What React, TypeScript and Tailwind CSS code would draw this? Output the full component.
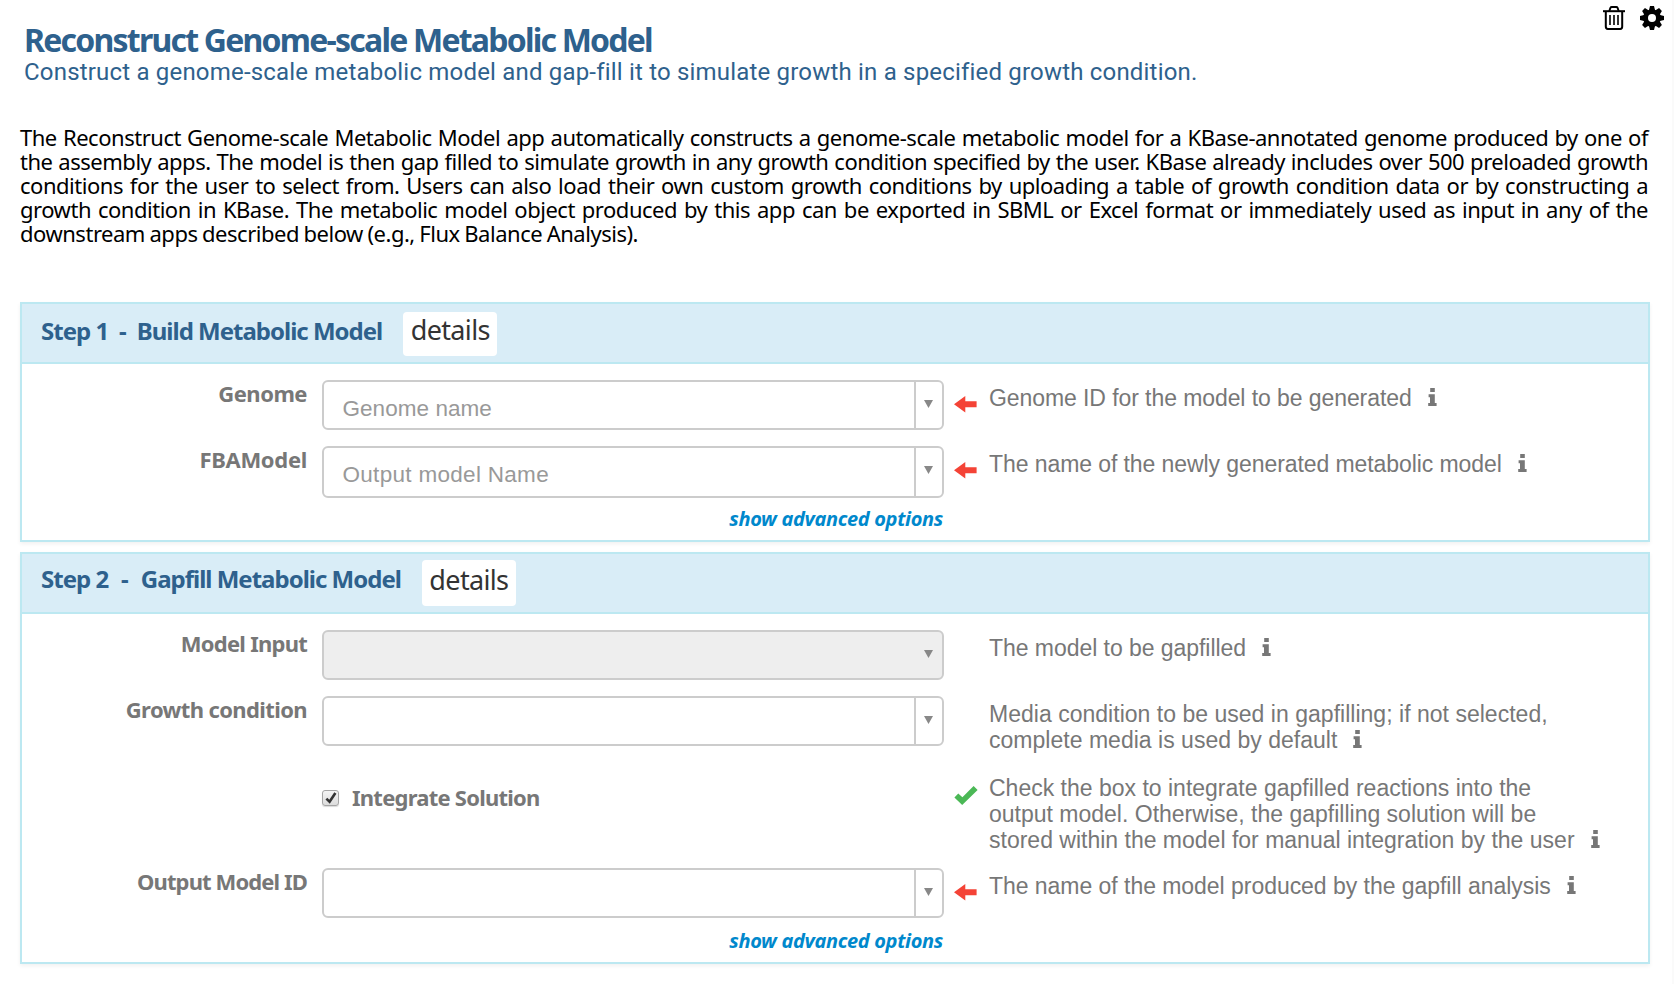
import type { ReactNode } from 'react';

const noto = "font-['Noto_Sans',sans-serif]";
const helv = "font-['Liberation_Sans',Arial,sans-serif]";

const TrashIcon = () => (
  <svg className="h-6 w-[22px]" viewBox="0 0 22 24" fill="none" stroke="#000">
    <path d="M0 5.2H22" strokeWidth="2" />
    <path d="M6.3 5L7.4 1.9Q7.8 1 8.8 1H13.2Q14.2 1 14.6 1.9L15.7 5" strokeWidth="1.9" />
    <path d="M2.8 5V20.6Q2.8 23 4.8 23H17.2Q19.2 23 19.2 20.6V5" strokeWidth="2" />
    <path d="M7 9V19M11 9V19M15 9V19" strokeWidth="1.6" />
  </svg>
);

const GearIcon = () => (
  <svg className="h-6 w-6" viewBox="-12 -12 24 24">
    <g fill="#000">
      {[0, 45, 90, 135].map((a) => (
        <path key={a} transform={`rotate(${a})`} d="M-2 -12H2L3 -8V8L2 12H-2L-3 8V-8Z" />
      ))}
      <circle r="8.8" />
    </g>
    <circle r="4" fill="#fff" />
  </svg>
);

const RedArrow = () => (
  <svg className="mt-[15.5px] h-[17px] w-[23px]" viewBox="0 0 23 17" fill="#f44336">
    <path d="M0 8.3L11.3 0V5.3H22.6V11.3H11.3V16.6Z" />
  </svg>
);

const GreenCheck = () => (
  <svg className="mt-[11px] h-[19px] w-[24px]" viewBox="0 0 24 19" fill="#4bb856">
    <path d="M0.4 11.4L4.3 7.4L8.4 11.3L19.6 0L23.6 4L8.2 19Z" />
  </svg>
);

const InfoIcon = () => (
  <svg className="ml-4 inline-block h-[18px] w-[9px] align-baseline" viewBox="0 0 9 18" fill="#777">
    <path d="M2.2 0H6.8V4H2.2ZM0.6 6.2H6.8V15H8.6V18H0.2V15H2V9.2H0.6Z" />
  </svg>
);

const Caret = () => (
  <svg className="h-2 w-[9px]" viewBox="0 0 9 8" fill="#888">
    <path d="M0 0H9L4.5 8Z" />
  </svg>
);

function Combo({ placeholder, spacing = '', tall, disabled }: { placeholder?: string; spacing?: string; tall?: boolean; disabled?: boolean }) {
  return (
    <div
      className={`flex w-[622px] rounded-[6px] border-2 border-[#ccc] ${tall ? 'h-[52px]' : 'h-[50px]'} ${disabled ? 'bg-[#eee]' : 'bg-white'}`}
    >
      <div className={`flex-1 pt-[14px] pl-[18.5px] text-[22.5px] leading-[26px] text-[#999] ${helv} ${spacing}`}>{placeholder}</div>
      <div className={`w-7 border-l-2 pt-[18px] pl-2 ${disabled ? 'border-transparent' : 'border-[#ccc]'}`}>
        <Caret />
      </div>
    </div>
  );
}

interface RowProps {
  label?: string;
  spacing?: string;
  field: ReactNode;
  mark?: ReactNode;
  lines: string[];
  height: string;
  descPad?: string;
  descSpacing?: string;
}

function Row({ label, spacing = '', field, mark, lines, height, descPad = 'pt-[5px]', descSpacing = '' }: RowProps) {
  return (
    <div className={`flex items-start ${height}`}>
      <div className={`w-[286px] pt-px pr-px text-right text-[22px] leading-6 font-bold whitespace-nowrap text-[#777] ${noto} ${spacing}`}>{label}</div>
      <div className="ml-[14px] w-[622px]">{field}</div>
      <div className="ml-[10px] w-[35px]">{mark}</div>
      <div className={`text-[23px] leading-[26px] whitespace-nowrap text-[#777] ${helv} ${descPad} ${descSpacing}`}>
        {lines.map((line, i) => (
          <div key={line} className="h-[26px]">
            {line}
            {i === lines.length - 1 && <InfoIcon />}
          </div>
        ))}
      </div>
    </div>
  );
}

function Panel({ step, title, titlePad, gap, button, children }: { step: string; title: string; titlePad: string; gap: string; button: string; children: ReactNode }) {
  return (
    <section className="w-[1630px] border-2 border-[#bce8f1] bg-white shadow-[0_2px_4px_rgba(0,0,0,0.06)]">
      <header className={`flex h-[60px] items-start border-b-2 border-[#bce8f1] bg-[#d9edf7] pl-[19px] ${noto}`}>
        <h2 className={`flex text-[24px] leading-[30px] font-bold tracking-[-1px] whitespace-pre text-[#2e618d] ${titlePad} ${gap}`}>
          <span>{step}</span>
          <span>-</span>
          <span>{title}</span>
        </h2>
        <button className={`ml-[21px] w-[94px] rounded-[4px] bg-white text-center text-[27px] leading-[30px] tracking-[-0.65px] text-[#333] ${button}`}>
          details
        </button>
      </header>
      {children}
    </section>
  );
}

const Advanced = () => (
  <div className={`w-[921px] pt-px text-right text-[20px] leading-6 font-bold tracking-[-0.33px] text-[#08c] italic ${noto}`}>show advanced options</div>
);

const intro = [
  'The Reconstruct Genome-scale Metabolic Model app automatically constructs a genome-scale metabolic model for a KBase-annotated genome produced by one of',
  'the assembly apps. The model is then gap filled to simulate growth in any growth condition specified by the user. KBase already includes over 500 preloaded growth',
  'conditions for the user to select from. Users can also load their own custom growth conditions by uploading a table of growth condition data or by constructing a',
  'growth condition in KBase. The metabolic model object produced by this app can be exported in SBML or Excel format or immediately used as input in any of the',
];

export default function App() {
  return (
    <div className="h-[984px] w-[1674px] overflow-hidden border-r-2 border-[#fafafa] bg-white pl-5">
      <div className="flex h-[125px] justify-between">
        <div className="pt-[21px] pl-1 whitespace-nowrap text-[#2e618d]">
          <h1 className={`text-[32px] leading-[37px] font-bold tracking-[-1.78px] ${noto}`}>Reconstruct Genome-scale Metabolic Model</h1>
          <p className="font-['Roboto',sans-serif] text-[24px] leading-7 tracking-[0.19px]">
            Construct a genome-scale metabolic model and gap-fill it to simulate growth in a specified growth condition.
          </p>
        </div>
        <div className="flex gap-[15px] pt-[6px] pr-2">
          <TrashIcon />
          <GearIcon />
        </div>
      </div>

      <div className={`h-[177px] w-[1628px] text-[22px] leading-6 text-black ${noto}`}>
        {intro.map((line) => (
          <p key={line} className="h-6 text-justify tracking-[-0.48px] [text-align-last:justify] [word-spacing:-2px]">{line}</p>
        ))}
        <p className="tracking-[-0.48px] [word-spacing:-0.7px]">downstream apps described below (e.g., Flux Balance Analysis).</p>
      </div>

      <div className="flex flex-col gap-[10px]">
        <Panel step="Step 1" title="Build Metabolic Model" titlePad="pt-[12px]" gap="gap-[11px]" button="mt-2 h-11 pt-[3px] pb-[11px]">
          <div className="h-[176px] pt-4">
            <Row
              label="Genome"
              spacing="tracking-[-0.5px]"
              height="h-[66px]"
              field={<Combo placeholder="Genome name" spacing="tracking-[0.05px]" />}
              mark={<RedArrow />}
              lines={['Genome ID for the model to be generated']}
              descSpacing="tracking-[-0.08px]"
            />
            <Row
              label="FBAModel"
              spacing="tracking-[-0.3px]"
              height="h-[60px]"
              field={<Combo placeholder="Output model Name" spacing="tracking-[0.3px]" tall />}
              mark={<RedArrow />}
              lines={['The name of the newly generated metabolic model']}
              descSpacing="tracking-[-0.08px]"
            />
            <Advanced />
          </div>
        </Panel>

        <Panel step="Step 2" title="Gapfill Metabolic Model" titlePad="pt-[10px]" gap="gap-[13px]" button="mt-[6px] h-[46px] pt-[5px] pb-[11px]">
          <div className="h-[348px] pt-4">
            <Row
              label="Model Input"
              spacing="tracking-[-0.75px]"
              height="h-[66px]"
              field={<Combo disabled />}
              lines={['The model to be gapfilled']}
              descSpacing="tracking-[-0.05px]"
            />
            <Row
              label="Growth condition"
              spacing="tracking-[-0.62px]"
              height="h-[79px]"
              field={<Combo />}
              lines={['Media condition to be used in gapfilling; if not selected,', 'complete media is used by default']}
              descSpacing="tracking-[0.02px]"
            />
            <Row
              height="h-[93px]"
              descPad="pt-0"
              mark={<GreenCheck />}
              field={
                <div className="flex pt-[10px]">
                  <span className="mt-[5px] flex h-4 w-[17px] items-center justify-center rounded-[3px] border border-[#a5a5a5] bg-gradient-to-b from-[#f4f4f4] to-[#dcdcdc] shadow-[0_1px_1px_rgba(0,0,0,0.15)]">
                    <svg className="h-3 w-3" viewBox="0 0 12 12" fill="none" stroke="#333" strokeWidth="2.6">
                      <path d="M1.4 6.6L4.6 9.8L10.4 1" />
                    </svg>
                  </span>
                  <span className={`ml-[13px] text-[22px] leading-6 font-bold tracking-[-0.76px] text-[#777] ${noto}`}>Integrate Solution</span>
                </div>
              }
              lines={[
                'Check the box to integrate gapfilled reactions into the',
                'output model. Otherwise, the gapfilling solution will be',
                'stored within the model for manual integration by the user',
              ]}
            />
            <Row
              label="Output Model ID"
              spacing="tracking-[-0.88px]"
              height="h-[60px]"
              field={<Combo />}
              mark={<RedArrow />}
              lines={['The name of the model produced by the gapfill analysis']}
              descSpacing="tracking-[-0.04px]"
            />
            <Advanced />
          </div>
        </Panel>
      </div>
    </div>
  );
}
